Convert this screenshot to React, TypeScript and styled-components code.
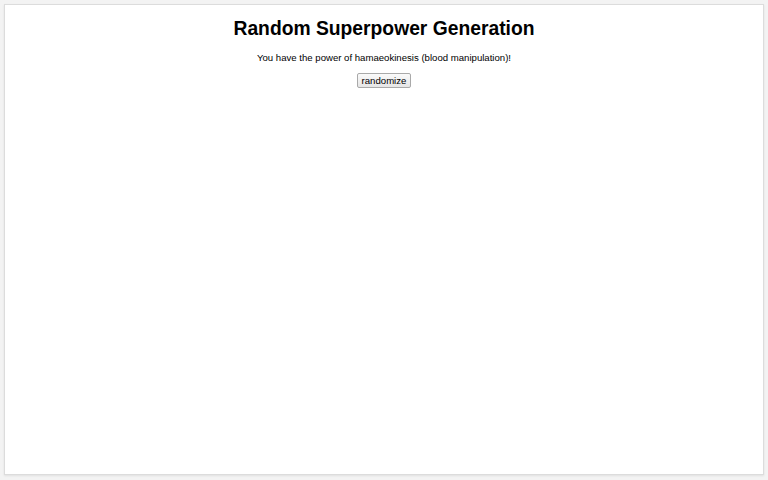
import styled, { createGlobalStyle } from 'styled-components';
import { useState } from 'react';

const powers = [
  'hamaeokinesis (blood manipulation)',
  'telekinesis (moving objects with the mind)',
  'pyrokinesis (fire manipulation)',
  'cryokinesis (ice manipulation)',
  'electrokinesis (electricity manipulation)',
  'invisibility',
  'flight',
];

export default function App() {
  const [power, setPower] = useState(powers[0]);

  const onRandomize = () => {
    const next = powers[Math.floor(Math.random() * powers.length)];
    setPower(next);
  };

  return (
    <>
      <GlobalStyle />
      <Page>
        <Card>
          <Title>Random Superpower Generation</Title>
          <Result>You have the power of {power}!</Result>
          <RandomButton onClick={onRandomize}>randomize</RandomButton>
        </Card>
      </Page>
    </>
  );
}

const GlobalStyle = createGlobalStyle`
  html, body {
    margin: 0;
    padding: 0;
    background: #f3f3f3;
  }
  body {
    font-family: 'Liberation Sans', Arial, sans-serif;
  }
`;

const Page = styled.div`
  box-sizing: border-box;
  height: 480px;
  padding: 4px 4px 5px 4px;
  display: flex;
`;

const Card = styled.div`
  flex: 1;
  display: flex;
  flex-direction: column;
  align-items: center;
  background: #fff;
  border: 1px solid #dcdcdc;
  box-shadow: 0 1px 2px rgba(0, 0, 0, 0.08);
  padding-top: 12px;
`;

const Title = styled.h1`
  margin: 0;
  font-size: 19.3px;
  font-weight: 700;
  color: #000;
  line-height: 23px;
`;

const Result = styled.p`
  margin: 12px 0 0;
  font-size: 9.6px;
  line-height: 12px;
  color: #000;
`;

const RandomButton = styled.button`
  margin-top: 9px;
  font-family: 'Liberation Sans', Arial, sans-serif;
  font-size: 9.6px;
  line-height: 12px;
  padding: 0 4px;
  height: 15px;
  color: #000;
  background: linear-gradient(#fafafa, #e6e6e6);
  border: 1px solid #a9a9a9;
  border-radius: 2px;
  cursor: pointer;
`;
